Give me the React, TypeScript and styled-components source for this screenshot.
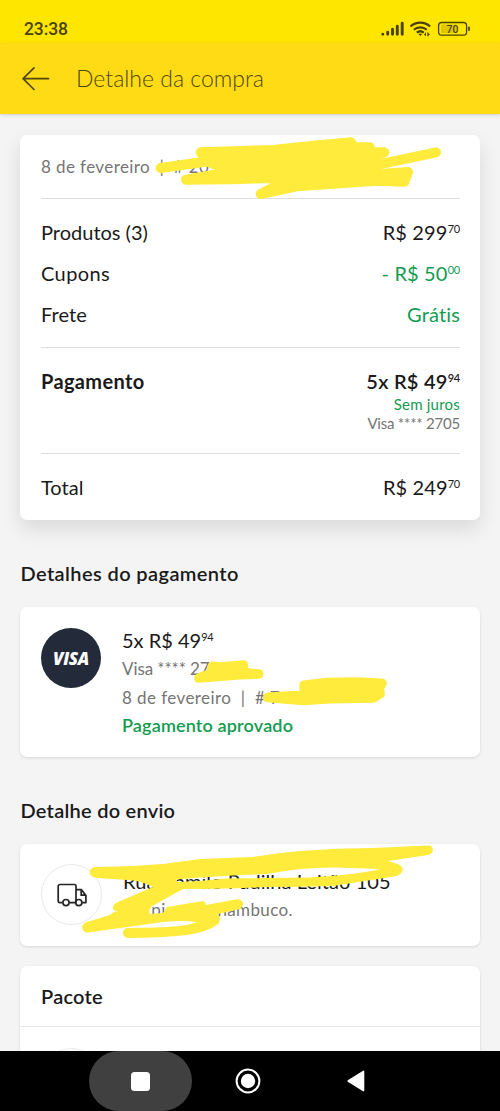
import React from "react";
import styled, { createGlobalStyle } from "styled-components";

const GlobalStyle = createGlobalStyle`
  * { box-sizing: border-box; }
  body { margin: 0; background: #f4f4f4; overflow: hidden; }
`;

const Screen = styled.div`
  position: relative;
  display: flex;
  flex-direction: column;
  width: 500px;
  height: 1111px;
  overflow: hidden;
  background: #f4f4f4;
  font-family: Lato, "Open Sans", sans-serif;
  font-variant-ligatures: none;
  color: #1a1a1a;
`;

const StatusBar = styled.div`
  flex: none;
  display: flex;
  align-items: center;
  justify-content: space-between;
  height: 43px;
  padding: 14px 29px 0 24px;
  background: #ffe600;
  color: #4a4200;
`;

const Clock = styled.span`
  font: 500 17.5px/28px Roboto, sans-serif;
  letter-spacing: -0.1px;
`;

const StatusIcons = styled.svg`
  display: block;
  width: 90px;
  height: 20px;
`;

const Header = styled.header`
  flex: none;
  display: flex;
  align-items: center;
  gap: 26px;
  height: 71px;
  padding: 0 22px;
  background: #ffdb15;
  box-shadow: 0 1px 3px rgba(0, 0, 0, 0.16);
  z-index: 1;
`;

const Title = styled.h1`
  margin: 0;
  padding-bottom: 2px;
  font-size: 23px;
  line-height: 30px;
  font-weight: 300;
  letter-spacing: 0;
  color: #51470a;
`;

const Content = styled.main`
  flex: 1;
  min-height: 0;
  overflow: hidden;
  padding: 21px 20px 0;
`;

const Card = styled.section<{ $raised?: boolean; $height?: number }>`
  height: ${(p) => (p.$height ? `${p.$height}px` : "auto")};
  padding: 0 20px 0 21px;
  border-radius: 7px;
  background: #fff;
  box-shadow: ${(p) =>
    p.$raised ? "0 9px 20px rgba(0, 0, 0, 0.11)" : "0 1px 3px rgba(0, 0, 0, 0.12)"};
`;

const Block = styled.div<{ $pad: string }>`
  padding: ${(p) => p.$pad};
  & + & { border-top: 1px solid #dedede; }
`;

const Row = styled.div<{ $height: number }>`
  display: flex;
  align-items: center;
  justify-content: space-between;
  height: ${(p) => p.$height}px;
`;

const Text = styled.span<{
  $size?: number;
  $line?: number;
  $weight?: number;
  $color?: string;
  $track?: number;
}>`
  display: block;
  white-space: pre;
  font-size: ${(p) => p.$size ?? 20}px;
  line-height: ${(p) => p.$line ?? 27}px;
  font-weight: ${(p) => p.$weight ?? 400};
  color: ${(p) => p.$color ?? "#1a1a1a"};
  letter-spacing: ${(p) => p.$track ?? 0}px;
`;

const Cents = styled.span`
  position: relative;
  top: -7px;
  font-size: 11px;
  line-height: 1;
  letter-spacing: -0.2px;
`;

const PaymentRow = styled.div`
  display: flex;
  justify-content: space-between;
`;

const PaymentInfo = styled.div`
  display: flex;
  flex-direction: column;
  align-items: flex-end;
`;

const Heading = styled.h2<{ $track: number }>`
  display: flex;
  align-items: center;
  height: 87px;
  margin: 0;
  padding: 18px 0 0 0.5px;
  font-size: 20px;
  font-weight: 600;
  letter-spacing: ${(p) => p.$track}px;
`;

const MediaRow = styled.div`
  display: flex;
  gap: 21px;
  padding-top: 20px;
`;

const Avatar = styled.div<{ $dark?: boolean }>`
  flex: none;
  display: flex;
  align-items: center;
  justify-content: center;
  width: ${(p) => (p.$dark ? 60 : 61)}px;
  height: ${(p) => (p.$dark ? 60 : 61)}px;
  margin-top: ${(p) => (p.$dark ? 1 : 0)}px;
  border-radius: 50%;
  border: ${(p) => (p.$dark ? "none" : "1px solid #e9e9e9")};
  background: ${(p) => (p.$dark ? "#232b3a" : "#fff")};
`;

const VisaMark = styled.span`
  padding-top: 2px;
  font: italic 800 17px/20px "Open Sans", sans-serif;
  letter-spacing: -0.3px;
  color: #fff;
`;

const PackageCard = styled(Card)`
  margin-top: 20px;
  padding: 0;
`;

const PackageTitle = styled.div`
  height: 61px;
  padding: 17px 21px 0;
  border-bottom: 1px solid #e6e6e6;
`;

const PackageBody = styled.div`
  height: 60px;
  padding: 21px 21px 0;
`;

const NavBar = styled.nav`
  flex: none;
  display: flex;
  align-items: center;
  height: 60px;
  padding-left: 89px;
  background: #000;
`;

const NavButton = styled.div<{ $width: number; $active?: boolean }>`
  display: flex;
  align-items: center;
  justify-content: center;
  width: ${(p) => p.$width}px;
  height: 60px;
  border-radius: 30px;
  background: ${(p) => (p.$active ? "#404040" : "transparent")};
`;

const Marker = styled.svg`
  position: absolute;
  inset: 0;
  width: 500px;
  height: 1111px;
  pointer-events: none;
  z-index: 2;
`;

const GREEN = "#139c50";
const GREY = "#757575";

const products = [
  { label: "Produtos (3)", value: "R$ 299", cents: "70", color: "#1a1a1a", track: 0 },
  { label: "Cupons", value: "- R$ 50", cents: "00", color: GREEN, track: 0.4 },
  { label: "Frete", value: "Grátis", cents: "", color: GREEN, track: 0.1 },
];

export default function App() {
  return (
    <Screen>
      <GlobalStyle />
      <StatusBar>
        <Clock>23:38</Clock>
        <StatusIcons viewBox="381 18 90 20">
          <g stroke="#4a4200" strokeWidth="2.9" strokeLinecap="round">
            <path d="M382.8 33.2V33.3M387.7 31.2V33.3M392.5 28.2V33.3M397.3 25.2V33.3M402.2 22.2V33.3" />
          </g>
          <g fill="none" stroke="#4a4200" strokeWidth="2.2">
            <path d="M410.5 25.5a14.5 14.5 0 0 1 19.6 0" />
            <path d="M413.8 28.8a9.7 9.7 0 0 1 13 0" />
            <path d="M416.8 31.7a5.5 5.5 0 0 1 7 0" />
          </g>
          <path d="M418.3 32.8h4l-2 2.3zM424 33.7l2-2.6v4.2zM427.3 31.1l3 2.6h-1.6v1.6h-1.4z" fill="#4a4200" />
          <rect x="438.6" y="21.5" width="28" height="12.6" rx="3.2" fill="none" stroke="#4a4200" strokeWidth="1.3" />
          <rect x="441" y="23.5" width="16" height="8.6" rx="1" fill="#e0c800" />
          <path d="M469 25.8v4" stroke="#4a4200" strokeWidth="1.7" />
          <text x="452.4" y="31.7" textAnchor="middle" fontFamily="Roboto, sans-serif" fontSize="10.5" fontWeight="500" fill="#4a4200">70</text>
        </StatusIcons>
      </StatusBar>
      <Header>
        <svg width="28" height="24" viewBox="0 0 28 24" fill="none" stroke="#51470a" strokeWidth="1.7" strokeLinecap="round" strokeLinejoin="round">
          <path d="M12 .9 1.1 11.7 12 22.5M1.1 11.7H26.5" />
        </svg>
        <Title>Detalhe da compra</Title>
      </Header>

      <Content>
        <Card $raised $height={385}>
          <Block $pad="18px 0 17px">
            <Text $size={17} $line={28} $color={GREY} $track={0.4}>8 de fevereiro  |  # 20</Text>
          </Block>
          <Block $pad="12px 0 13px">
            {products.map((p) => (
              <Row key={p.label} $height={41}>
                <Text $line={28} $track={p.track}>{p.label}</Text>
                <Text $line={28} $color={p.color} $track={0.15}>
                  {p.value}
                  {p.cents && <Cents>{p.cents}</Cents>}
                </Text>
              </Row>
            ))}
          </Block>
          <Block $pad="20px 0 20px">
            <PaymentRow>
              <Text $weight={700} $track={0.35}>Pagamento</Text>
              <PaymentInfo>
                <Text $weight={600} $track={0.25}>5x R$ 49<Cents>94</Cents></Text>
                <Text $size={15} $line={19} $color={GREEN} $track={0.22}>Sem juros</Text>
                <Text $size={15} $line={19} $color={GREY} $track={-0.22}>Visa **** 2705</Text>
              </PaymentInfo>
            </PaymentRow>
          </Block>
          <Block $pad="0">
            <Row $height={66}>
              <Text>Total</Text>
              <Text $track={0.1}>R$ 249<Cents>70</Cents></Text>
            </Row>
          </Block>
        </Card>

        <Heading $track={0.4}>Detalhes do pagamento</Heading>
        <Card $height={150}>
          <MediaRow>
            <Avatar $dark><VisaMark>VISA</VisaMark></Avatar>
            <div>
              <Text $line={26}>5x R$ 49<Cents>94</Cents></Text>
              <Text $size={17} $line={32} $color={GREY} $track={-0.1}>Visa **** 27</Text>
              <Text $size={17} $line={26} $color={GREY} $track={0.42}>8 de fevereiro  |  # 7</Text>
              <Text $size={18} $line={28} $weight={600} $color={GREEN} $track={0.16}>Pagamento aprovado</Text>
            </div>
          </MediaRow>
        </Card>

        <Heading $track={0.25}>Detalhe do envio</Heading>
        <Card $height={102}>
          <MediaRow>
            <Avatar>
              <svg width="30" height="24" viewBox="0 0 30 24" fill="none" stroke="#242424" strokeWidth="1.7" strokeLinejoin="round">
                <path d="M5.2 19.6H3a1.8 1.8 0 0 1-1.8-1.8V3.3A1.8 1.8 0 0 1 3 1.5h14.2A1.8 1.8 0 0 1 19 3.3v16.3M12.4 19.6h6.2M19 6.6h5.3l4.6 6v7H25.2M24.2 6.6v5.6h4.4" />
                <circle cx="9" cy="19.6" r="3.1" />
                <circle cx="21.8" cy="19.6" r="3.1" />
              </svg>
            </Avatar>
            <div>
              <Text $line={34} $track={0.06}>Rua Camilo Padilha Leitão 105</Text>
              <Text $size={17} $line={24} $color={GREY} $track={0.36}>      pi           nambuco.</Text>
            </div>
          </MediaRow>
        </Card>

        <PackageCard>
          <PackageTitle><Text $weight={600} $track={0.25}>Pacote</Text></PackageTitle>
          <PackageBody><Avatar /></PackageBody>
        </PackageCard>
      </Content>

      <NavBar>
        <NavButton $width={103} $active>
          <svg width="19" height="19"><rect width="19" height="19" rx="3.5" fill="#fff" /></svg>
        </NavButton>
        <NavButton $width={112}>
          <svg width="26" height="26" viewBox="0 0 26 26">
            <circle cx="13" cy="13" r="11.4" fill="none" stroke="#fff" strokeWidth="2" />
            <circle cx="13" cy="13" r="7.2" fill="#fff" />
          </svg>
        </NavButton>
        <NavButton $width={104}>
          <svg width="18" height="22" viewBox="0 0 18 22">
            <path d="M1.2 11 16.5 1.4v19.2z" fill="#fff" stroke="#fff" strokeWidth="1.6" strokeLinejoin="round" />
          </svg>
        </NavButton>
      </NavBar>

      <Marker viewBox="0 0 500 1111" fill="#ffeb3b" stroke="#ffeb3b" strokeLinejoin="round" strokeLinecap="round">
        <g transform="translate(150 125) scale(.33333)" strokeWidth="30">
          <path d="M152 82 370 75 490 62 603 52 612 66 659 67 664 81 703 82 672 95 665 118 680 148 774 141 763 170 680 167 440 184 332 207 375 185 400 158 240 163 108 164 245 140 180 112Z" />
          <path fill="none" d="M32 129 180 108M670 122 858 82" />
        </g>
        <g transform="translate(180 600) scale(.33333)" strokeWidth="29">
          <path d="M57 234 180 224 236 222 190 218 190 195 120 201 97 199 95 220Z" />
          <path d="M263 292 370 301 450 296 580 294 600 281 597 262 606 250 530 246 440 248 372 256 375 285Z" />
        </g>
        <g stroke="none" fillRule="evenodd">
          <path d="M96 867Q130 867 163 864L200 859Q226 858 253 857 276 853 300 851 336 848 373 848L428 845.5C434.5 845 434.5 854 428 855L388 861 398 864Q408 870 397 876L333 886Q300 887 267 887 220 889 183 889L163 900 152 906Q148 910 150 914L163 913 167 907 203 901Q206 902 206 905L238 899Q247 902 240 909L218 914Q222 919 218 924 208 932 187 935 160 938 129 938C121 938 121 928 128 928Q148 928 167 927 188 926 197 922 180 920 163 922L88 932.5C81 933 80 923 87 922L110 915Q112 912 118 911C111 911 111 905 118 902L153 887Q140 880 127 880L97 878C87 877 88 867 96 867ZM176 879.5 200 877.5 233 875.5 267 874Q310 866 350 868L380 869Q362 874 310 877.5L267 878 225 878.5 200 881 178 882Z" />
        </g>
      </Marker>
    </Screen>
  );
}
